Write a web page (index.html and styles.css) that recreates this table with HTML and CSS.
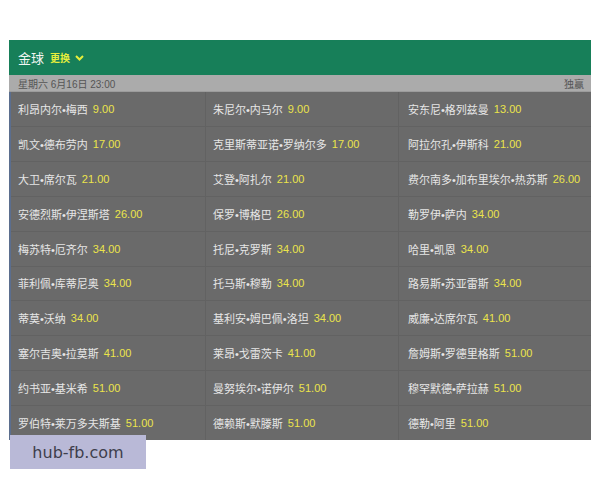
FILE: index.html
```html
<!DOCTYPE html>
<html lang="zh">
<head>
<meta charset="utf-8">
<link rel="stylesheet" href="styles.css">
</head>
<body>
<div class="page">
  <div class="panel">
    <div class="header">
      <span class="title">金球</span>
      <span class="change">更换</span>
      <svg class="chev" width="9" height="6" viewBox="0 0 9 6"><path d="M1 1 L4.5 4.5 L8 1" fill="none" stroke="#e6ee3c" stroke-width="2"/></svg>
    </div>
    <div class="datebar">
      <span>星期六 6月16日 23:00</span>
      <span>独赢</span>
    </div>
    <div class="grid">
      <div class="cell">利昂内尔•梅西<b>9.00</b></div>
      <div class="cell">朱尼尔•内马尔<b>9.00</b></div>
      <div class="cell">安东尼•格列兹曼<b>13.00</b></div>
      <div class="cell">凯文•德布劳内<b>17.00</b></div>
      <div class="cell">克里斯蒂亚诺•罗纳尔多<b>17.00</b></div>
      <div class="cell">阿拉尔孔•伊斯科<b>21.00</b></div>
      <div class="cell">大卫•席尔瓦<b>21.00</b></div>
      <div class="cell">艾登•阿扎尔<b>21.00</b></div>
      <div class="cell">费尔南多•加布里埃尔•热苏斯<b>26.00</b></div>
      <div class="cell">安德烈斯•伊涅斯塔<b>26.00</b></div>
      <div class="cell">保罗•博格巴<b>26.00</b></div>
      <div class="cell">勒罗伊•萨内<b>34.00</b></div>
      <div class="cell">梅苏特•厄齐尔<b>34.00</b></div>
      <div class="cell">托尼•克罗斯<b>34.00</b></div>
      <div class="cell">哈里•凯恩<b>34.00</b></div>
      <div class="cell">菲利佩•库蒂尼奥<b>34.00</b></div>
      <div class="cell">托马斯•穆勒<b>34.00</b></div>
      <div class="cell">路易斯•苏亚雷斯<b>34.00</b></div>
      <div class="cell">蒂莫•沃纳<b>34.00</b></div>
      <div class="cell">基利安•姆巴佩•洛坦<b>34.00</b></div>
      <div class="cell">威廉•达席尔瓦<b>41.00</b></div>
      <div class="cell">塞尔吉奥•拉莫斯<b>41.00</b></div>
      <div class="cell">莱昂•戈雷茨卡<b>41.00</b></div>
      <div class="cell">詹姆斯•罗德里格斯<b>51.00</b></div>
      <div class="cell">约书亚•基米希<b>51.00</b></div>
      <div class="cell">曼努埃尔•诺伊尔<b>51.00</b></div>
      <div class="cell">穆罕默德•萨拉赫<b>51.00</b></div>
      <div class="cell">罗伯特•莱万多夫斯基<b>51.00</b></div>
      <div class="cell">德赖斯•默滕斯<b>51.00</b></div>
      <div class="cell">德勒•阿里<b>51.00</b></div>
    </div>
  </div>
  <div class="watermark">hub-fb.com</div>
</div>
</body>
</html>
```
FILE: styles.css
```css
html, body {
  margin: 0;
  padding: 0;
  background: #ffffff;
}
body {
  width: 600px;
  height: 480px;
  overflow: hidden;
  font-family: "Liberation Sans", "Noto Sans CJK SC", sans-serif;
}
.page {
  position: relative;
  padding: 40px 9px 0 9px;
}
.panel {
  width: 582px;
}
.header {
  height: 35px;
  background: #177f59;
  display: flex;
  align-items: center;
  padding-left: 9px;
}
.title {
  color: #f2f6f2;
  font-size: 13px;
  margin-right: 6px;
}
.change {
  color: #e6ee3c;
  font-size: 10px;
  font-weight: bold;
  margin-right: 5px;
}
.chev {
  margin-top: 1px;
}
.datebar {
  height: 17px;
  background: #ababab;
  border-bottom: 1px solid #9c9c9c;
  display: flex;
  justify-content: space-between;
  align-items: center;
  padding: 0 7px 0 9px;
  font-size: 10px;
  color: #555555;
  box-sizing: border-box;
}
.grid {
  display: grid;
  grid-template-columns: 194px 192px 1fr;
  grid-template-rows: repeat(10, 1fr);
  height: 348px;
  gap: 1px;
  background: #626262;
  border-left: 2px solid #5b6e8e;
}
.cell {
  background: #6a6a6a;
  display: flex;
  align-items: center;
  padding-left: 7px;
  font-size: 11px;
  color: #e6e6e6;
  white-space: nowrap;
}
.cell:nth-child(3n+2) {
  padding-left: 7px;
}
.cell:nth-child(3n) {
  padding-left: 9px;
}
.cell b {
  font-weight: normal;
  color: #ebe44a;
  margin-left: 5px;
}
.watermark {
  position: absolute;
  left: 10px;
  top: 435px;
  width: 136px;
  height: 34px;
  background: #b9b9d7;
  color: #3e3e4c;
  font-family: "DejaVu Sans", sans-serif;
  font-size: 16px;
  display: flex;
  align-items: center;
  justify-content: center;
}
```
